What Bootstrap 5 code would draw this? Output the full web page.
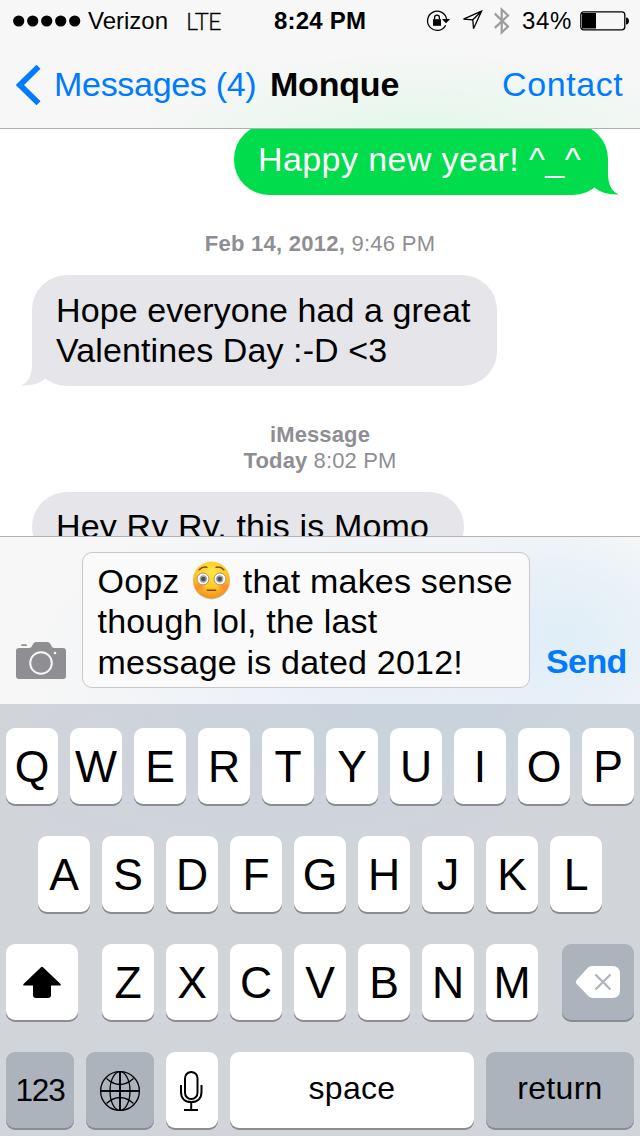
<!DOCTYPE html>
<html lang="en">
<head>
<meta charset="utf-8">
<meta name="viewport" content="width=device-width, initial-scale=1">
<title>Messages</title>
<link href="https://cdn.jsdelivr.net/npm/bootstrap@5.3.0/dist/css/bootstrap.min.css" rel="stylesheet">
<style>
body{font-family:"Liberation Sans",Arial,sans-serif;font-size:34px;line-height:40px;color:#000;background:#fff;overflow:hidden}
.phone{width:640px;height:1136px}
.topbar{height:129px;border-bottom:1px solid #b2b2b2;z-index:3;background:radial-gradient(ellipse 290px 85px at 420px 135px,#e3f8ea 0,#ebf7ef 40%,rgba(247,247,247,0) 100%),#f7f7f7}
.status{height:41px;font-size:24px;line-height:40px;padding:1px 0 0 13px}
.dots{width:68px;height:12px}
.carrier{width:80px;margin-left:7px}
.lte{font-family:Lato,"Liberation Sans",sans-serif;font-weight:300;font-size:23.5px;width:52px;margin-left:18px;letter-spacing:-.6px;-webkit-text-stroke:.35px #000}
.clock{width:96px;margin-left:36px;letter-spacing:.2px}
.pct{width:54px;letter-spacing:.6px}
.navrow{height:87px;padding:0 0 0 16px}
.ios-blue{color:#007aff}
.back{width:247px;text-decoration:none}
.back span{margin:-2px 0 0 12px;letter-spacing:-.3px}
.who{width:140px;margin:-2px 0 0 7px;letter-spacing:-.2px}
.contact{margin:-2px 0 0 92px;letter-spacing:.6px;text-decoration:none}
.thread{height:407px;overflow:hidden}
.bubble{padding:15px 24px 16px;border-radius:35px;width:max-content}
.sent{background:#00dc4b;color:#fff;margin:-5px 32px 0 auto;width:374px;letter-spacing:.4px}
.got{background:#e5e5ea;margin-left:32px;letter-spacing:.1px}
.got.last{padding-top:14px;letter-spacing:.15px}
.tail{width:40px;height:36px;bottom:0}
.sent .tail{right:-12px;fill:#00dc4b}
.got .tail{left:-12px;transform:scaleX(-1);fill:#e5e5ea}
.stamp{font-size:22px;line-height:26px;color:#8e8e93;letter-spacing:.12px}
.stamp.wide{letter-spacing:.26px}
.compose{height:168px;border-top:1px solid #b2b2b2;padding:15px 0 0 16px;background:radial-gradient(ellipse 150px 120px at 560px 100px,#dfeef7 0,rgba(230,240,248,0) 100%),radial-gradient(ellipse 380px 190px at 400px 130px,#e7eef8 0,rgba(247,247,247,0) 100%),#f7f7f7}
.field{width:448px;height:136px;margin-left:16px;padding:7.5px 0 0 14.5px;border:1px solid #c7c7cc;border-radius:10px;background:#fafafa;line-height:40.5px;letter-spacing:.2px;white-space:nowrap}
.emoji{width:41px;height:41px;margin:-7px 1px 0 2px;vertical-align:middle}
.cam{margin-top:90px}
.send{margin:89px 0 0 16px;letter-spacing:-.6px}
.board{height:432px;padding:24px 6px 0;gap:32px;background:radial-gradient(ellipse 330px 110px at 430px 0,#c8d3de 0,rgba(205,210,220,0) 100%),radial-gradient(ellipse 300px 110px at 270px 60px,#cdd1dc 0,rgba(209,213,219,0) 100%),#d1d5da}
.krow{gap:12px}
.key{width:52px;height:76px;border:0;padding:0;border-radius:9px;background:#fff;box-shadow:0 2px 0 #898b8f;color:#000;font-size:44.5px;line-height:78px}
.key.dim{background:#acb3bd}
.key.word{font-size:32px;line-height:71px;letter-spacing:.3px;padding-bottom:4px}
.key.num{font-size:31.5px;line-height:76px;letter-spacing:-1.2px}
.w72{width:72px}.w68{width:68px}.w148{width:148px}.w244{width:244px}
</style>
</head>
<body>
<main class="phone d-flex flex-column">
  <header class="topbar flex-shrink-0 position-relative">
    <div class="status d-flex align-items-center text-nowrap">
      <svg class="dots" viewBox="0 0 68 12"><circle cx="5.7" cy="6" r="5.6"/><circle cx="19.7" cy="6" r="5.6"/><circle cx="33.7" cy="6" r="5.6"/><circle cx="47.7" cy="6" r="5.6"/><circle cx="61.7" cy="6" r="5.6"/></svg>
      <span class="carrier">Verizon</span><span class="lte">LTE</span>
      <span class="clock fw-bold">8:24 PM</span>
      <svg width="152" height="40" viewBox="370 0 152 40" fill="none" stroke="#000">
        <path d="M445.700 24.200A9.600 9.600 0 1 1 446.600 18" stroke-width="1.300"/>
        <path d="M441.800 18h8.400l-4.200 4.200z" fill="#000" stroke="none"/>
        <path d="M433 18.200h8v6.600h-8z" fill="#000" stroke="none"/><path d="M434.600 18.500v-1.800a2.400 2.600 0 0 1 4.800 0v1.800" stroke-width="1.300"/>
        <path d="M481.500 10.200 463.500 18.200 472.800 18.800 473.500 27.800Z M481.500 10.200 472.800 18.800" stroke-width="1.300"/>
        <path d="M494.800 12.600 508 25.500l-6.300 6V8.500l6.300 6-13.200 12.400" stroke="#9c9c9c" stroke-width="2.200"/>
      </svg>
      <span class="pct">34%</span>
      <svg class="ms-1" width="50" height="20" viewBox="0 0 50 20"><rect x=".8" y=".8" width="44" height="18" rx="3" fill="none" stroke="#000" stroke-width="1.300"/><path d="M2 2h14v15.500H2zM46 6.500c4 0 4 7 0 7z"/></svg>
    </div>
    <nav class="navrow d-flex align-items-center text-nowrap">
      <a class="back ios-blue d-flex align-items-center" href="#"><svg width="26" height="40" viewBox="0 0 26 40"><path d="M22.500 1.800 4 20l18.500 18.200" fill="none" stroke="#007aff" stroke-width="5.800"/></svg><span>Messages (4)</span></a>
      <span class="who fw-bold">Monque</span>
      <a class="contact ios-blue" href="#">Contact</a>
    </nav>
  </header>
  <section class="thread flex-shrink-0">
    <div class="bubble sent position-relative text-nowrap">Happy new year! ^_^<svg class="tail position-absolute" viewBox="0 0 40 36"><path d="M28 0V14C28 26 32 33 39 35.400 30 36 20 33.500 14.500 28.500L10 10Z"/></svg></div>
    <div class="stamp wide text-center" style="margin-top:36px"><b>Feb 14, 2012,</b> 9:46 PM</div>
    <div class="bubble got position-relative" style="margin-top:18px;width:465px">Hope everyone had a great<br>Valentines Day :-D &lt;3<svg class="tail position-absolute" viewBox="0 0 40 36"><path d="M28 0V14C28 26 32 33 39 35.400 30 36 20 33.500 14.500 28.500L10 10Z"/></svg></div>
    <div class="stamp text-center" style="margin-top:36px"><b>iMessage</b><br><b>Today</b> 8:02 PM</div>
    <div class="bubble got last text-nowrap" style="margin-top:18px;width:432px">Hey Ry Ry, this is Momo</div>
  </section>
  <section class="compose d-flex align-items-start flex-shrink-0">
    <svg class="cam flex-shrink-0" width="50" height="38" viewBox="0 0 50 38"><path d="M3 6h10c2 0 2.500-1.200 3.500-3S18.500 0 20 0h11c2 0 3 1.200 4 3s1.500 3 3.500 3H47q3 0 3 3v25q0 3-3 3H3q-3 0-3-3V9Q0 6 3 6z" fill="#8e8e93"/><path d="M6 2.200h4q1 0 1 1.800H5q0-1.800 1-1.800z" fill="#8e8e93"/><circle cx="25" cy="21" r="10.800" fill="none" stroke="#f7f7f7" stroke-width="2"/><circle cx="39" cy="11" r="1.300" fill="#f7f7f7"/></svg>
    <div class="field flex-shrink-0">Oopz <svg class="emoji" viewBox="0 0 40 40" role="img" aria-label="flushed face"><defs><radialGradient id="skin" cx=".5" cy=".3" r=".72"><stop offset="0" stop-color="#ffe64a"/><stop offset=".55" stop-color="#ffc928"/><stop offset="1" stop-color="#f28a1c"/></radialGradient><radialGradient id="blush"><stop offset="0" stop-color="#ff7a2e" stop-opacity=".75"/><stop offset="1" stop-color="#ff7a2e" stop-opacity="0"/></radialGradient></defs><ellipse cx="20" cy="21" rx="17.500" ry="17.500" fill="#000" opacity=".2"/><circle cx="20" cy="19.500" r="18" fill="url(#skin)"/><circle cx="8" cy="26" r="6" fill="url(#blush)"/><circle cx="32" cy="26" r="6" fill="url(#blush)"/><g fill="#fff" stroke="#a98a5b" stroke-width=".9"><circle cx="11.700" cy="18.500" r="5.800"/><circle cx="28.300" cy="18.500" r="5.800"/></g><g fill="#4b5058" stroke="#a2a5aa" stroke-width="1.400"><circle cx="12" cy="18.500" r="2.900"/><circle cx="28" cy="18.500" r="2.900"/></g><path d="M8 9.500q3-3.300 7.500-2.500M24.500 7q4.500-.8 7.500 2.500M16 29.500h8" fill="none" stroke="#8a4612" stroke-width="1.500" stroke-linecap="round"/></svg> that makes sense<br>though lol, the last<br>message is dated 2012!</div>
    <a class="send ios-blue fw-bold text-decoration-none" href="#">Send</a>
  </section>
  <section class="board d-flex flex-column flex-shrink-0">
    <div class="krow d-flex justify-content-center"><button class="key">Q</button><button class="key">W</button><button class="key">E</button><button class="key">R</button><button class="key">T</button><button class="key">Y</button><button class="key">U</button><button class="key">I</button><button class="key">O</button><button class="key">P</button></div>
    <div class="krow d-flex justify-content-center"><button class="key">A</button><button class="key">S</button><button class="key">D</button><button class="key">F</button><button class="key">G</button><button class="key">H</button><button class="key">J</button><button class="key">K</button><button class="key">L</button></div>
    <div class="d-flex justify-content-between">
      <button class="key w72 d-flex" aria-label="shift"><svg width="72" height="76"><path d="M35 23.200q1-1 2 0L54.500 40q1 1.500-.5 1.500h-9V51q0 3-3 3H30q-3 0-3-3v-9.500h-9q-1.500 0-.5-1.500z"/></svg></button>
      <div class="krow d-flex"><button class="key">Z</button><button class="key">X</button><button class="key">C</button><button class="key">V</button><button class="key">B</button><button class="key">N</button><button class="key">M</button></div>
      <button class="key dim w72 d-flex" aria-label="delete"><svg width="72" height="76"><path d="M30 22h20q8 0 8 8v16q0 8-8 8H31q-2.500 0-4.500-1.800L14.500 39.800q-1.200-1.800 0-3.600L25.500 24q2-2 4.500-2z" fill="#fff"/><path d="m33.500 30.500 15 15m0-15-15 15" stroke="#acb3bd" stroke-width="2.200"/></svg></button>
    </div>
    <div class="krow d-flex">
      <button class="key dim num w68">123</button>
      <button class="key dim w68 d-flex" aria-label="globe"><svg width="68" height="76" fill="none" stroke="#000" stroke-width="1.300"><circle cx="34" cy="39" r="19.400"/><ellipse cx="34" cy="39" rx="10" ry="19.400"/><path d="M34 19v40M14 39h40M20.500 26.500q13.500 12 27 0M20.500 51.500q13.500-12 27 0"/><path d="M34 19v40M14 39h40" stroke-width="1.700"/></svg></button>
      <button class="key d-flex" aria-label="dictate"><svg width="52" height="76" fill="none" stroke="#000" stroke-width="2"><rect x="19" y="20" width="12.500" height="27" rx="6.250"/><path d="M15 33v7c0 6.500 4 10 10.200 10S35.500 46.500 35.500 40v-7M25.200 50v8M18 58h14"/></svg></button>
      <button class="key word w244">space</button>
      <button class="key dim word w148">return</button>
    </div>
  </section>
</main>
<script src="https://cdn.jsdelivr.net/npm/bootstrap@5.3.0/dist/js/bootstrap.bundle.min.js"></script>
</body>
</html>
